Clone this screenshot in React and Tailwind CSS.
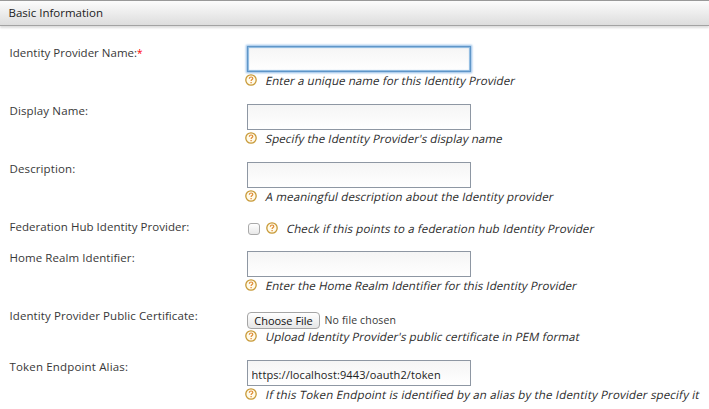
function HelpIcon() {
  return (
    <svg className="h-[12px] w-[12px] shrink-0" viewBox="0 0 12 12" fill="none">
      <circle cx="6" cy="6" r="5.2" fill="#fffbea" stroke="#c89a38" strokeWidth="1.3" />
      <path d="M4.3 4.7C4.4 3.5 5.1 3 6.1 3c1 0 1.7.6 1.7 1.4C7.8 5.5 6.1 5.7 6.1 7.1" stroke="#e08a35" strokeWidth="1.2" />
      <path d="M6.1 8v1.3" stroke="#e08a35" strokeWidth="1.3" />
    </svg>
  );
}

function Help({ children, spacing }) {
  return (
    <div className="flex h-[18px] items-start">
      <span className="-ml-[2px] mt-[1.5px] flex"><HelpIcon /></span>
      <span className={"ml-[7.5px] inline-block origin-[0_13px] -skew-x-12 whitespace-nowrap text-[11.5px] leading-[17px] text-[#2c2c2c] " + spacing}>{children}</span>
    </div>
  );
}

function Row({ label, required, spacing, height, children }) {
  return (
    <div className={"flex " + height}>
      <div className={"w-[238px] shrink-0 whitespace-nowrap pl-[0.5px] text-[11.5px] leading-[14px] " + spacing}>
        {label}
        {required && <span className="text-[10px] text-[#f00]">*</span>}
      </div>
      <div className="w-[462px] shrink-0">{children}</div>
    </div>
  );
}

const fieldBase = "block h-[26px] w-[224px] border bg-linear-to-b from-[#f5f5f5] to-white px-[3.5px] pt-[2px] text-[11px] tracking-[0.11px] text-[#222] outline-none ";
const field = fieldBase + "border-[#8e97a3]";
const focused = fieldBase + "border-[#6096c8] shadow-[0_0_2px_1px_#8ebbe6,inset_0_0_1px_1px_#8ab7df]";

export default function App() {
  return (
    <div className="h-[409px] w-[709px] overflow-hidden bg-white font-['Open_Sans','Noto_Sans',sans-serif] text-[11px] text-[#383838]">
      <header className="h-[26px] border-t border-b border-t-[#999] border-b-[#a3a3a3] bg-linear-to-b from-[#fcfcfc] to-[#dddddd] pl-[8.5px] text-[11.5px] leading-[24px] text-[#222] shadow-[0_2px_2px_#ddd]">
        Basic Information
      </header>
      <main className="pt-[20px] pl-[9px]">
        <Row label="Identity Provider Name:" required height="h-[58px]" spacing="tracking-[0.02px]">
          <input className={focused} />
          <Help spacing="tracking-[0.09px]">Enter a unique name for this Identity Provider</Help>
        </Row>
        <Row label="Display Name:" height="h-[58px]" spacing="tracking-[0.13px]">
          <input className={field} />
          <Help spacing="tracking-[0.1px]">Specify the Identity Provider's display name</Help>
        </Row>
        <Row label="Description:" height="h-[58px]" spacing="tracking-[0.12px]">
          <input className={field} />
          <Help spacing="tracking-[0.13px]">A meaningful description about the Identity provider</Help>
        </Row>
        <Row label="Federation Hub Identity Provider:" height="h-[31px]" spacing="tracking-[0.04px]">
          <div className="flex">
            <input type="checkbox" className="mt-[3px] mr-[8px] ml-px h-[12px] w-[12px] appearance-none rounded-[3px] border border-[#aaa] bg-linear-to-b from-white to-[#e8e8e8]" />
            <Help spacing="tracking-[0.14px]">Check if this points to a federation hub Identity Provider</Help>
          </div>
        </Row>
        <Row label="Home Realm Identifier:" height="h-[58px]" spacing="tracking-[0.07px]">
          <input className={field} />
          <Help spacing="tracking-[0.09px]">Enter the Home Realm Identifier for this Identity Provider</Help>
        </Row>
        <Row label="Identity Provider Public Certificate:" height="h-[51px]" spacing="tracking-[0.09px]">
          <div className="flex h-[19px] items-center pt-[3px]">
            <button className="h-[17px] w-[73px] shrink-0 rounded-[4px] border border-[#a5a5a5] bg-linear-to-b from-white to-[#e6e6e6] text-[11px] leading-[15px] text-[#111]">Choose File</button>
            <span className="ml-[4.5px] pt-[2px] text-[10.5px] tracking-[0.15px]">No file chosen</span>
          </div>
          <Help spacing="tracking-[0.08px]">Upload Identity Provider's public certificate in PEM format</Help>
        </Row>
        <Row label="Token Endpoint Alias:" height="h-[49px]" spacing="tracking-[0.16px]">
          <input className={field} defaultValue="https://localhost:9443/oauth2/token" />
          <Help spacing="tracking-[0.17px]">If this Token Endpoint is identified by an alias by the Identity Provider specify it</Help>
        </Row>
      </main>
    </div>
  );
}
